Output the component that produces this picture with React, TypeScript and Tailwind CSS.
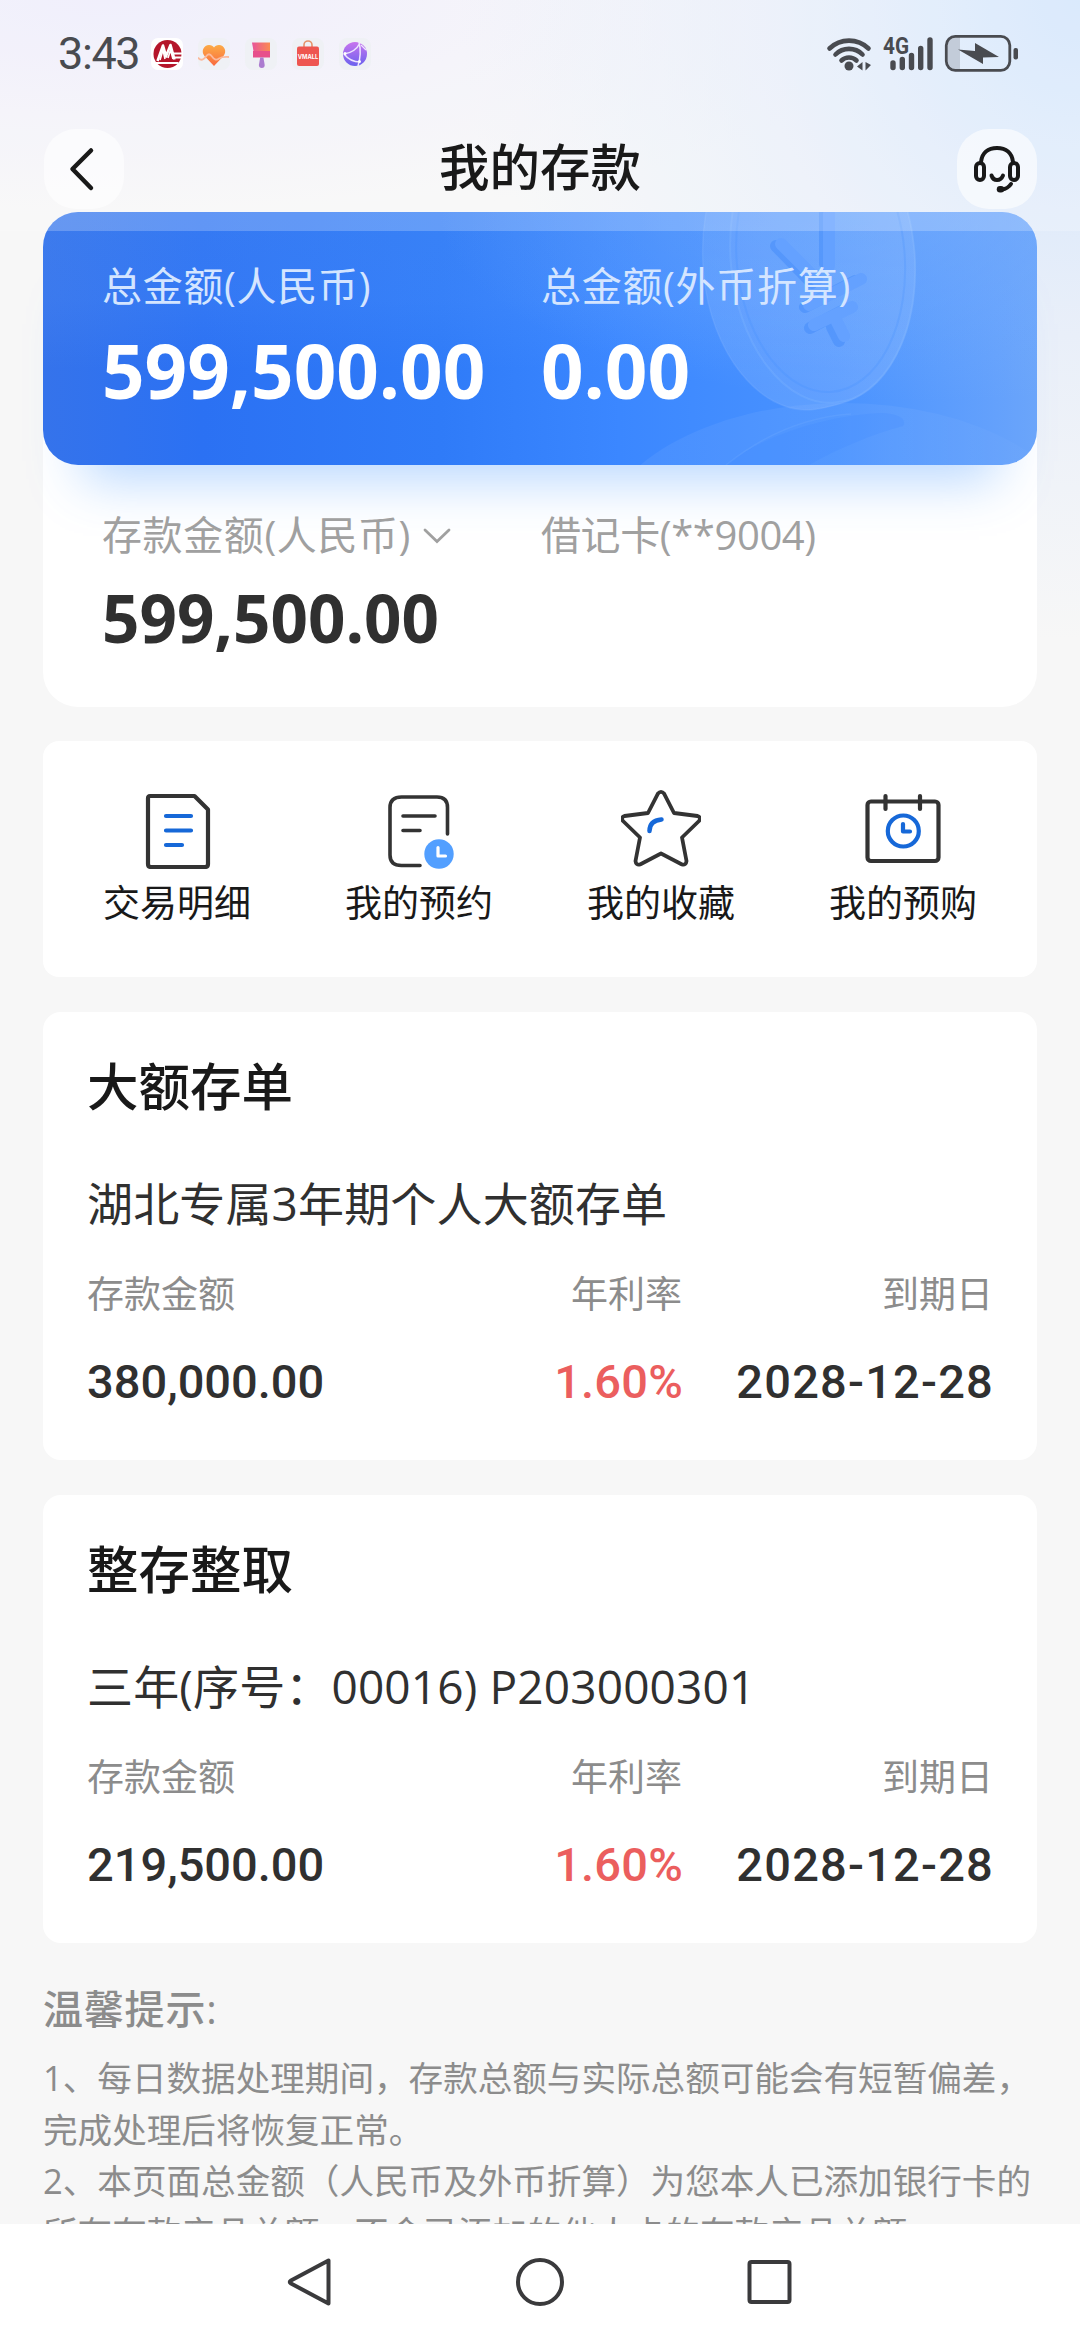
import type { ReactNode } from "react";

interface Deposit {
  title: string;
  name: string;
  amount: string;
  rate: string;
  dueDate: string;
}

const deposits: Deposit[] = [
  {
    title: "大额存单",
    name: "湖北专属3年期个人大额存单",
    amount: "380,000.00",
    rate: "1.60%",
    dueDate: "2028-12-28",
  },
  {
    title: "整存整取",
    name: "三年(序号：00016) P203000301",
    amount: "219,500.00",
    rate: "1.60%",
    dueDate: "2028-12-28",
  },
];

const tips = [
  "1、每日数据处理期间，存款总额与实际总额可能会有短暂偏差，",
  "完成处理后将恢复正常。",
  "2、本页面总金额（人民币及外币折算）为您本人已添加银行卡的",
  "所有存款产品总额，不含已添加的他人卡的存款产品总额。",
];

function AppBadges() {
  return (
    <div className="flex gap-[15px]">
      <svg className="size-8" viewBox="0 0 32 32">
        <rect width="32" height="32" rx="7" fill="#fff" />
        <circle cx="16.500" cy="16" r="14" fill="#b5162b" />
        <path d="M6.500 23 12 7.500l3.500 12M14.500 19.500 19.500 7l4 14.500" fill="none" stroke="#fff" strokeWidth="2.600" strokeLinejoin="round" />
        <path d="M9 22 12 12l2 9M17 20l2.500-8 2.500 9" fill="none" stroke="#fff" strokeWidth="1.600" />
        <path d="M4 25h23.500M22 15.500h10M24 19.500h8" stroke="#fff" strokeWidth="1.800" />
      </svg>
      <svg className="size-8" viewBox="0 0 32 32">
        <defs>
          <linearGradient id="heart" x1="0" y1="0" x2="0" y2="1">
            <stop offset="0" stopColor="#fcab45" />
            <stop offset="1" stopColor="#f96a3f" />
          </linearGradient>
        </defs>
        <rect width="32" height="32" rx="8" fill="#eff1f5" />
        <path d="M16 28 6.500 18C2.500 13 6 7 11 7c2.500 0 4 1 5 2.500C17 8 18.500 7 21 7c5 0 8.500 6 4.500 11Z" fill="url(#heart)" />
        <path d="M0 19.500c3 4 6 2 8-1s4-3 6 0 4 4 7 2 6-1.500 10-1.500" fill="none" stroke="#fbb99c" strokeWidth="1.800" />
      </svg>
      <svg className="size-8" viewBox="0 0 32 32">
        <defs>
          <linearGradient id="brush" x1="0" y1="0" x2="1" y2="0">
            <stop offset="0" stopColor="#e8559a" />
            <stop offset="1" stopColor="#fb8b52" />
          </linearGradient>
        </defs>
        <rect width="32" height="32" rx="8" fill="#eff1f5" />
        <path d="M7 4.500h18V13H8.500Z" fill="url(#brush)" />
        <path d="M8 13h17v6.500H8Z" fill="#e7508b" />
        <path d="M15.200 19.500h3.200l1.300 7.500a2.900 2.900 0 0 1-5.800 0Z" fill="#ab7ccf" />
      </svg>
      <svg className="size-8" viewBox="0 0 32 32">
        <rect width="32" height="32" rx="8" fill="#eff1f5" />
        <path d="M12 9V7a4 4 0 0 1 8 0v2" fill="none" stroke="#e6926b" strokeWidth="1.600" />
        <rect x="5" y="8.500" width="22" height="19.500" rx="2" fill="#ee5650" />
        <text x="16" y="20.500" textAnchor="middle" fontSize="5.800" fontWeight="700" fill="#fff" fontFamily="Inter">
          VMALL
        </text>
      </svg>
      <svg className="size-8" viewBox="0 0 32 32">
        <defs>
          <linearGradient id="globe" x1="0" y1="0" x2="0" y2="1">
            <stop offset="0" stopColor="#c875ee" />
            <stop offset="1" stopColor="#6b62ee" />
          </linearGradient>
        </defs>
        <rect width="32" height="32" rx="8" fill="#eff1f5" />
        <circle cx="16" cy="16" r="12" fill="url(#globe)" />
        <path d="M5 16C12 15 18 11 21 5M5 16c4 5 9 8 16 8M20 4c2 8 2 14-1 24" fill="none" stroke="#eee6ff" strokeWidth="1.500" />
        <path d="M22 7l5 5" stroke="#eee6ff" strokeWidth="1.200" />
        <circle cx="6" cy="15.500" r="1.500" fill="#fff" />
        <circle cx="20.500" cy="23.500" r="1.500" fill="#fff" />
      </svg>
    </div>
  );
}

function StatusBar() {
  return (
    <div className="flex h-[106px] items-start justify-between pr-[60px] pl-[58px] text-[#494b50]">
      <div className="flex items-center pt-[38px]">
        <span className="mr-3 w-[81px] font-['Roboto'] text-[45px] leading-8 font-normal tracking-[-1.4px] whitespace-nowrap">3:43</span>
        <AppBadges />
      </div>
      <svg className="mt-[34px] h-[38px] w-[194px]" viewBox="826 34 194 38" fill="currentColor">
        <g fill="none" stroke="currentColor" strokeWidth="4.600" strokeLinecap="round">
          <path d="M829.500 48.500a28 28 0 0 1 39 0" />
          <path d="M835.500 54.500a19 19 0 0 1 27 0" />
          <path d="M841.500 60.500a11 11 0 0 1 15 0" />
        </g>
        <circle cx="849" cy="66" r="4.500" />
        <path d="M862.500 62v8.500l-5.500-4ZM865.500 62v8.500l5.500-5.500Z" />
        <text x="883" y="54" fontSize="23" fontWeight="700" textLength="26" lengthAdjust="spacingAndGlyphs" fontFamily="Roboto">
          4G
        </text>
        <g stroke="currentColor" strokeWidth="5.400" strokeLinecap="round">
          <path d="M893 63v4.500M902.300 59.500v8M911.500 55.500v12M920.700 48.500v19M930 40v27.500" />
        </g>
        <path d="M948 43q0-6 6-6h6v32h-6q-6 0-6-6Z" fill="#c3ccd9" />
        <rect x="946.300" y="36.300" width="63.500" height="34" rx="9" fill="none" stroke="currentColor" strokeWidth="2.800" />
        <path d="M958 49.500 975 51v-8l24 14-16 .500v6.500Z" />
        <rect x="1013.500" y="48" width="4.500" height="11.500" rx="2" />
      </svg>
    </div>
  );
}

function IconButton({ children }: { children: ReactNode }) {
  return (
    <button className="flex size-20 items-center justify-center rounded-[32px] bg-white/60 text-[#191919]">
      {children}
    </button>
  );
}

function TitleBar() {
  return (
    <div className="flex items-start justify-between px-[43.5px] pt-[23px]">
      <IconButton>
        <svg className="size-20" viewBox="0 0 80 80" fill="none" stroke="currentColor" strokeWidth="4.500" strokeLinecap="round" strokeLinejoin="round">
          <path d="M47 21.500 28.500 40 47 59" />
        </svg>
      </IconButton>
      <h1 className="pt-[12px] text-[50.5px] leading-[52px] font-medium text-[#191919]">我的存款</h1>
      <IconButton>
        <svg className="size-20" viewBox="0 0 80 80" fill="none" stroke="currentColor" strokeWidth="4" strokeLinecap="round" strokeLinejoin="round">
          <rect x="19" y="34" width="8" height="17" rx="4" />
          <rect x="53" y="34" width="8" height="17" rx="4" />
          <path d="M24 33c1-9 7-14 16-14s15 5 16 14" />
          <path d="M34.500 46.500c2 6 9 6 11.500 0" />
          <path d="M54 55c-2 3-5 5-9 5.500" />
          <path d="M44 60.300h-1" strokeWidth="6.500" />
        </svg>
      </IconButton>
    </div>
  );
}

// Coins fading into the right half of the summary card
function CoinArt() {
  return (
    <svg className="absolute inset-0 size-full" viewBox="0 0 994 253" fill="none">
      <defs>
        <linearGradient id="coinSide" x1="0" y1="0" x2="0" y2="1">
          <stop offset="0.300" stopColor="#fff" stopOpacity="0.060" />
          <stop offset="1" stopColor="#fff" stopOpacity="0.120" />
        </linearGradient>
        <linearGradient id="pile" x1="0" y1="0" x2="1" y2="0">
          <stop offset="0" stopColor="#fff" stopOpacity="0.060" />
          <stop offset="0.600" stopColor="#fff" stopOpacity="0.050" />
          <stop offset="1" stopColor="#fff" stopOpacity="0" />
        </linearGradient>
      </defs>
      <ellipse cx="800" cy="333" rx="245" ry="142" fill="url(#pile)" />
      <path d="M683 253c40-32 105-50 155-52 20 0 26 8 22 13-30 8-64 22-94 39Z" fill="#2f80ff" fillOpacity="0.140" />
      <path d="M683 253c40-32 80-48 125-51" stroke="#7fb4ff" strokeOpacity="0.200" strokeWidth="1.500" />
      <g transform="rotate(-5 770 50)">
        <path
          d="M752-96c-52 0-92 66-92 147s44 146 96 146c12 0 22-2 36-5 46-12 80-70 80-145S832-98 780-98Z"
          fill="url(#coinSide)"
          stroke="#8fbcff"
          strokeOpacity="0.200"
          strokeWidth="1.500"
        />
        <ellipse cx="780" cy="46" rx="92" ry="146" fill="#fff" fillOpacity="0.020" stroke="#8fbfff" strokeOpacity="0.220" strokeWidth="2" />
        <ellipse cx="778" cy="46" rx="84" ry="135" stroke="#3f8bff" strokeOpacity="0.220" strokeWidth="2" />
      </g>
      <g strokeLinecap="round" strokeWidth="12">
        <path d="M733 34l36 37M782 2v50M762 95l50-26M767 116l32-17M789 115l7 14" stroke="#468df9" strokeOpacity="0.550" />
        <path d="M738 32l36 36M786 2v52M766 93l52-26M771 113l38-18M794 110l7 14" stroke="#64a1ff" />
      </g>
    </svg>
  );
}

function Summary() {
  return (
    <section className="h-[495px] rounded-[35px] bg-white">
      <div className="relative h-[253px] rounded-[35px] bg-[linear-gradient(90deg,#3573eb_0%,#2b71f3_16%,#2f7bf8_40%,#3b87ff_58%,#4a93ff_80%,#64a1fc_96%,#6ba5fa_100%)] shadow-[0_54px_50px_-40px_rgba(64,146,255,0.38)]">
        <div className="absolute inset-0 rounded-[35px] bg-[linear-gradient(180deg,rgba(90,150,240,0.22)_0%,rgba(100,160,250,0.15)_35%,rgba(110,170,250,0)_62%)]" />
        <div className="absolute inset-0 rounded-[35px] bg-[radial-gradient(ellipse_480px_190px_at_88%_0%,rgba(125,178,255,0.5)_0%,rgba(125,178,255,0)_100%)]" />
        <div className="absolute inset-0 overflow-hidden rounded-[35px]">
          <CoinArt />
        </div>
        <div className="relative grid grid-cols-[439px_1fr] pt-[49px] pl-[59px] whitespace-nowrap text-white">
          <p className="text-[40px] leading-[50px] tracking-[0.7px] text-[#d4e5ff]">总金额(人民币)</p>
          <p className="text-[40px] leading-[50px] tracking-[0.7px] text-[#d4e5ff]">总金额(外币折算)</p>
          <p className="pt-[14px] text-[74.5px] leading-[90px] font-bold">599,500.00</p>
          <p className="pt-[14px] text-[74.5px] leading-[90px] font-bold">0.00</p>
        </div>
      </div>
      <div className="relative grid grid-cols-[439px_1fr] pt-[45px] pl-[59px] whitespace-nowrap text-[#a0a0a0]">
        <p className="flex items-center text-[40px] leading-[50px] tracking-[0.6px]">
          存款金额(人民币)
          <svg className="ml-[11px] h-5 w-[30px]" viewBox="0 0 30 20" fill="none" stroke="currentColor" strokeWidth="2.800" strokeLinecap="round">
            <path d="M3 5l12 11.500L27 5" />
          </svg>
        </p>
        <p className="text-[40px] leading-[50px] tracking-[-0.4px]">借记卡(**9004)</p>
        <p className="pt-[18px] text-[65.5px] leading-[80px] font-bold text-[#303030]">599,500.00</p>
      </div>
    </section>
  );
}

const actions: { label: string; icon: ReactNode }[] = [
  {
    label: "交易明细",
    icon: (
      <>
        <path d="M13 7h44.500L71 20.500V75q0 3-3 3H14q-3 0-3-3V9.500Q11 7 13 7Z" />
        <path d="M29 27h25M29 41.500h25M29 56h16" stroke="#1668d8" />
      </>
    ),
  },
  {
    label: "我的预约",
    icon: (
      <>
        <path d="M68.500 45V18.500q0-10.500-10.500-10.500H22.500Q11 8 11 18.500V66q0 10.500 11.500 10.500H41" strokeWidth="3.600" />
        <path d="M24 27h32M24 41.500h17" strokeWidth="3.600" />
        <circle cx="60" cy="65" r="14.700" fill="#529fff" stroke="none" />
        <path d="M59 58.500v8.500h7.500" stroke="#fff" strokeWidth="3.200" />
      </>
    ),
  },
  {
    label: "我的收藏",
    icon: (
      <>
        <path
          d="M36.800 4.800q3.200-4 6.400 0L53 24l23.500 3q4 1.500 1.500 5L61 48.500l4.500 23.500q-.500 4.500-4.500 3.500L40 64.500 19 75.500q-4 1-4.500-3.500L19 48.500 2 32q-2.500-3.500 1.500-5L27 24Z"
          strokeWidth="3.800"
        />
        <path d="M28.500 42q0-10.500 12-11.500" stroke="#1668d8" strokeWidth="4.500" />
      </>
    ),
  },
  {
    label: "我的预购",
    icon: (
      <>
        <rect x="4.500" y="12.500" width="71" height="59.500" rx="3.500" />
        <path d="M22.500 7v13M57 7v13" />
        <circle cx="40.300" cy="42" r="15.500" stroke="#1668d8" />
        <path d="M40 35v7.500h7" stroke="#1668d8" />
      </>
    ),
  },
];

function QuickActions() {
  return (
    <section className="mt-[34px] grid h-[236px] grid-cols-4 rounded-[16px] bg-white px-[13px] pt-[48px]">
      {actions.map((action) => (
        <button key={action.label} className="flex flex-col items-center">
          <svg className="size-20" viewBox="0 0 80 80" fill="none" stroke="#333" strokeWidth="4.200" strokeLinecap="round" strokeLinejoin="round">
            {action.icon}
          </svg>
          <span className="pt-[12px] text-[37px] leading-[44px] text-[#191919]">{action.label}</span>
        </button>
      ))}
    </section>
  );
}

function DepositCard({ deposit }: { deposit: Deposit }) {
  return (
    <section className="mt-[35px] h-[448px] rounded-[18px] bg-white px-[44px] pt-[42px] whitespace-nowrap">
      <h2 className="text-[51.5px] leading-[64px] font-medium text-[#191919]">{deposit.title}</h2>
      <p className="pt-[55px] text-[46px] leading-[60px] tracking-[0.15px] text-[#303030]">{deposit.name}</p>
      <div className="grid grid-cols-[1fr_240px_310px] pt-[36px] text-[37px] leading-[50px] text-[#8c8c8c]">
        <span>存款金额</span>
        <span className="pr-px text-right">年利率</span>
        <span className="text-right">到期日</span>
      </div>
      <div className="grid grid-cols-[1fr_240px_310px] pt-[33px] font-['Roboto'] text-[47px] leading-[60px] font-medium text-[#303030]">
        <span>{deposit.amount}</span>
        <span className="text-right tracking-[0.2px] text-[#eb5e5e]">{deposit.rate}</span>
        <span className="-mr-px text-right tracking-[1.2px]">{deposit.dueDate}</span>
      </div>
    </section>
  );
}

function NavigationBar() {
  return (
    <nav className="relative flex h-[116px] shrink-0 items-center justify-center gap-[180px] bg-white text-[#3a3a3c]">
      <svg className="size-[50px]" viewBox="0 0 50 50" fill="none" stroke="currentColor" strokeWidth="4" strokeLinejoin="round">
        <path d="M43.500 3.500v43L6 26.500q-2.500-1.500 0-3Z" />
      </svg>
      <svg className="size-[50px]" viewBox="0 0 50 50" fill="none" stroke="currentColor" strokeWidth="4">
        <circle cx="25" cy="25" r="22" />
      </svg>
      <svg className="size-[50px]" viewBox="0 0 50 50" fill="none" stroke="currentColor" strokeWidth="4">
        <rect x="4.500" y="5" width="40" height="40" rx="2" />
      </svg>
    </nav>
  );
}

export default function App() {
  return (
    <div className="flex h-[2340px] w-[1080px] flex-col overflow-hidden bg-[#f7f7f7] bg-[radial-gradient(ellipse_620px_640px_at_100%_0%,#d0e4fc_0%,rgba(226,235,250,0.7)_50%,rgba(247,247,247,0)_100%),radial-gradient(ellipse_800px_230px_at_10%_0%,#edebfb_0%,rgba(247,247,247,0)_100%)] font-['Open_Sans','Noto_Sans_CJK_SC',sans-serif]">
      <header className="relative z-10 h-[231px] shrink-0 bg-white/22">
        <StatusBar />
        <TitleBar />
      </header>
      <main className="-mt-[19px] min-h-0 flex-1 overflow-hidden px-[43px]">
        <Summary />
        <QuickActions />
        {deposits.map((deposit) => (
          <DepositCard key={deposit.title} deposit={deposit} />
        ))}
        <div className="pt-[41px] whitespace-nowrap text-[#8c8c8c]">
          <h3 className="text-[40px] leading-[50px] font-medium tracking-[0.8px]">温馨提示:</h3>
          <div className="pt-[18px] text-[34.6px] leading-[51.5px]">
            {tips.map((line) => (
              <p key={line}>{line}</p>
            ))}
          </div>
        </div>
      </main>
      <NavigationBar />
    </div>
  );
}
